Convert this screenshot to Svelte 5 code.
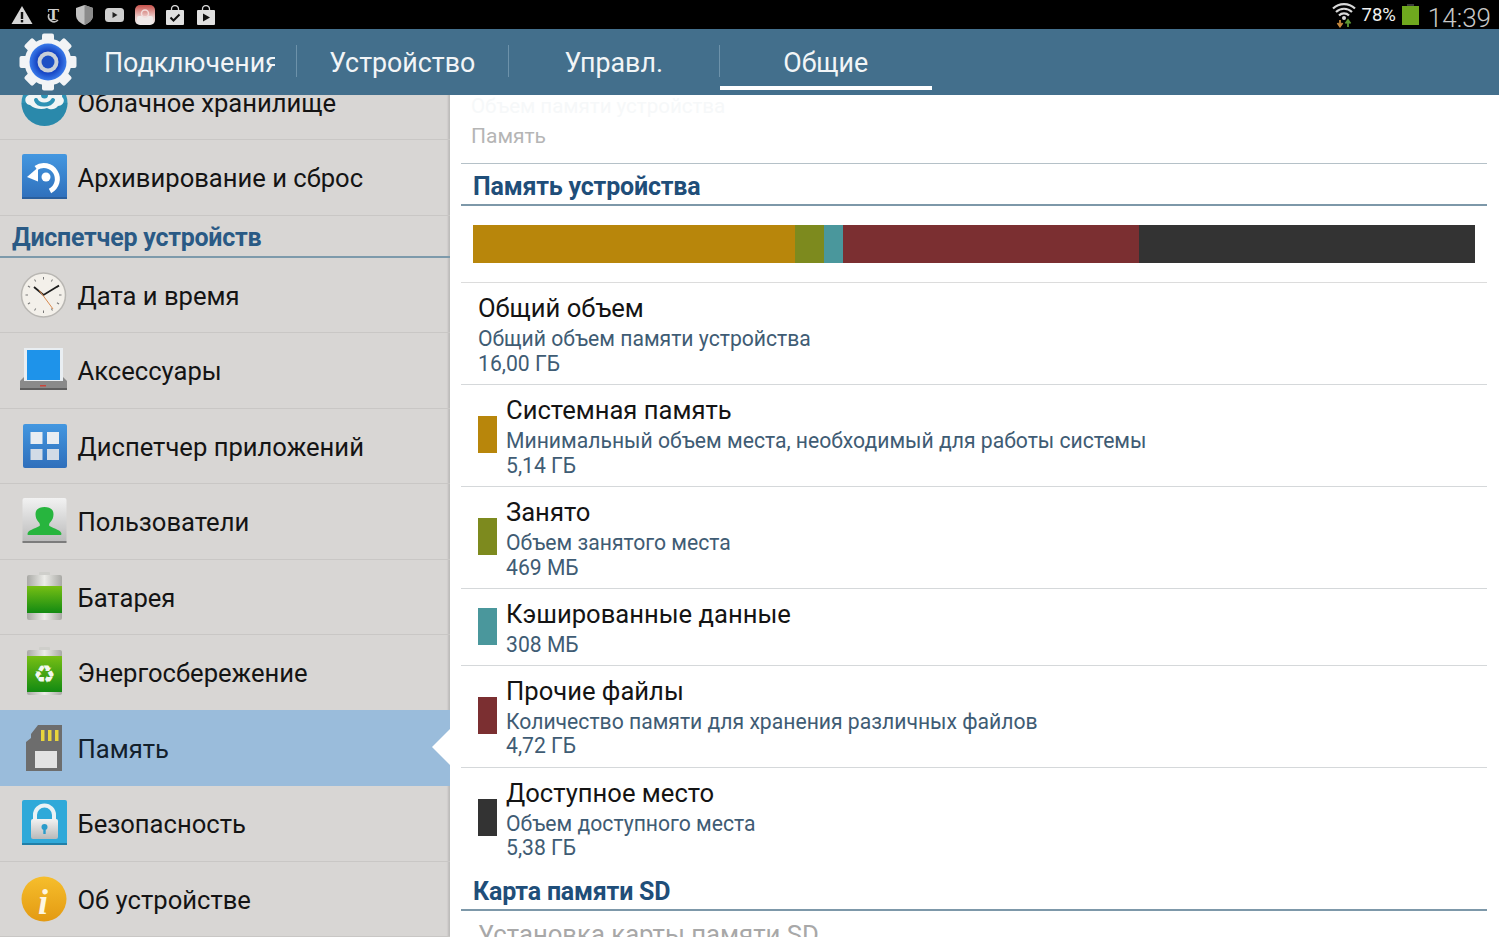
<script>
  const tabs = [
    { label: 'Подключения', first: true },
    { label: 'Устройство' },
    { label: 'Управл.' },
    { label: 'Общие', active: true }
  ];
  const items = [
    { kind: 'row', icon: 'cloud', label: 'Облачное хранилище' },
    { kind: 'row', icon: 'backup', label: 'Архивирование и сброс' },
    { kind: 'head', label: 'Диспетчер устройств' },
    { kind: 'row', icon: 'clock', label: 'Дата и время' },
    { kind: 'row', icon: 'dock', label: 'Аксессуары' },
    { kind: 'row', icon: 'apps', label: 'Диспетчер приложений' },
    { kind: 'row', icon: 'user', label: 'Пользователи' },
    { kind: 'row', icon: 'battery', label: 'Батарея' },
    { kind: 'row', icon: 'eco', label: 'Энергосбережение' },
    { kind: 'row', icon: 'sd', label: 'Память', selected: true },
    { kind: 'row', icon: 'lock', label: 'Безопасность' },
    { kind: 'row', icon: 'info', label: 'Об устройстве' }
  ];
  const segments = [
    { color: '#b8860b', width: 322 },
    { color: '#7d8a1e', width: 29 },
    { color: '#4a979c', width: 19 },
    { color: '#7b2f31', width: 296 },
    { color: '#333333', width: 336 }
  ];
  const stats = [
    { title: 'Общий объем', sub: 'Общий объем памяти устройства', value: '16,00 ГБ' },
    { color: '#b8860b', title: 'Системная память', sub: 'Минимальный объем места, необходимый для работы системы', value: '5,14 ГБ' },
    { color: '#7d8a1e', title: 'Занято', sub: 'Объем занятого места', value: '469 МБ' },
    { color: '#4a979c', title: 'Кэшированные данные', value: '308 МБ' },
    { color: '#7b2f31', title: 'Прочие файлы', sub: 'Количество памяти для хранения различных файлов', value: '4,72 ГБ' },
    { color: '#333333', title: 'Доступное место', sub: 'Объем доступного места', value: '5,38 ГБ', last: true }
  ];
  const gearTeeth = [0, 45, 90, 135, 180, 225, 270, 315];
  const clockTicks = [0, 30, 60, 90, 120, 150, 180, 210, 240, 270, 300, 330];
</script>

{#snippet rowIcon(name)}
  <svg class="ricon" viewBox="0 0 52 52" aria-hidden="true">
    {#if name === 'cloud'}
      <circle cx="26.5" cy="27" r="23" fill="#2f93b5" />
      <path d="M26.5 50a23 23 0 0 0 23-23h-46a23 23 0 0 0 23 23z" fill="#257f9f" opacity=".45" />
      <path d="M12 29c-5 0-7-8-1-10 1-6 8-8 12-5 3-3 9-3 11 0 5-2 11 2 10 7 4 3 1 9-4 9-3 4-8 4-11 2-5 2-13 1-17-3z" fill="#f1f5f5" />
      <path d="M18 24c2 6 14 6 17 0" fill="none" stroke="#2f93b5" stroke-width="4" stroke-linecap="round" />
      <circle cx="26.5" cy="19" r="3.5" fill="#2f93b5" />
    {:else if name === 'backup'}
      <rect x="4" y="3" width="45" height="45" rx="2" fill="url(#g-blue)" />
      <rect x="4" y="46" width="45" height="2" fill="#2a5f9d" />
      <path d="M32 40A13.5 13.5 0 1 0 18 17" fill="none" stroke="#fff" stroke-width="5" />
      <path d="M9 26l11-9.500v14z" fill="#fff" />
      <circle cx="28" cy="26" r="4.500" fill="#fff" />
    {:else if name === 'clock'}
      <circle cx="25.500" cy="26" r="22" fill="#f3f0ea" stroke="#b9b7b3" stroke-width="1.500" />
      {#each clockTicks as a}
        <line x1="25.500" y1="8" x2="25.500" y2="10.500" stroke="#777" stroke-width="1" transform="rotate({a} 25.500 26)" />
      {/each}
      <path d="M16 18l9.500 8L41 16.500" fill="none" stroke="#1d1d1d" stroke-width="1.800" />
      <path d="M21 21l14 19" stroke="#d98a4f" stroke-width="1" />
    {:else if name === 'dock'}
      <rect x="6" y="4" width="39" height="35" fill="#e9eef2" />
      <rect x="9" y="6" width="33" height="30" fill="#1e93ea" />
      <path d="M2 46v-9l4-4v4h39v-4l4 4v9z" fill="#8a8a8a" />
      <rect x="2" y="44" width="47" height="2" fill="#5f5f5f" />
      <rect x="22" y="41" width="6" height="1.500" fill="#c9453b" />
    {:else if name === 'apps'}
      <rect x="5" y="4" width="44" height="44" rx="2" fill="url(#g-blue)" />
      <rect x="12.500" y="12" width="12" height="12" fill="#e8edf2" />
      <rect x="29" y="12" width="12" height="12" fill="#e8edf2" />
      <rect x="12.500" y="29" width="12" height="11" fill="#d2dbe6" />
      <rect x="29" y="29" width="12" height="11" fill="#d2dbe6" />
    {:else if name === 'user'}
      <rect x="4.500" y="3" width="44" height="45" rx="2" fill="url(#g-silver)" />
      <rect x="4.500" y="46" width="44" height="2" fill="#7c7c7c" />
      <path d="M9.500 39c0-4 7-5 12-8 1-1 0-3-1-4-2-2-3-5-3-8 0-5 4-7 9-7s9 2 9 7c0 3-1 6-3 8-1 1-2 3-1 4 5 3 12 4 12 8 0 1-1 1-2 1H11c-1 0-1.500 0-1.500-1z" fill="#27b53e" />
    {:else if name === 'battery' || name === 'eco'}
      <rect x="21" y="1" width="11" height="4" rx="1" fill="#cfcfcb" />
      <rect x="9" y="4" width="35" height="45" rx="2" fill="url(#g-metal)" />
      <rect x="9" y="{name === 'eco' ? 10 : 15}" width="35" height="{name === 'eco' ? 36 : 27}" fill="url(#g-green)" />
      {#if name === 'eco'}
        <text class="recycle" x="26.500" y="37" text-anchor="middle">♻</text>
      {/if}
    {:else if name === 'sd'}
      <path d="M20 3h24v46H8V20l5-4v-4z" fill="#6d6d6d" />
      <rect x="23" y="8" width="3.500" height="11" fill="#e8d53c" />
      <rect x="30" y="8" width="3.500" height="11" fill="#e8d53c" />
      <rect x="37" y="8" width="3.500" height="11" fill="#e8d53c" />
      <rect x="17" y="29" width="22" height="17" fill="#e3e3e3" />
    {:else if name === 'lock'}
      <rect x="4" y="3" width="45" height="45" rx="2" fill="#2fa9d9" />
      <rect x="4" y="46" width="45" height="2" fill="#207fa8" />
      <path d="M17 24v-6a9.500 9.500 0 0 1 19 0v6" fill="none" stroke="#eaf2f5" stroke-width="4" />
      <rect x="13" y="22" width="27" height="20" rx="2" fill="url(#g-silver)" />
      <circle cx="26.500" cy="30" r="3" fill="#2a9ccb" />
      <rect x="25.300" y="31" width="2.400" height="6" fill="#2a9ccb" />
    {:else if name === 'info'}
      <circle cx="26" cy="26" r="22.500" fill="url(#g-amber)" />
      <text class="info-i" x="25" y="41" text-anchor="middle">i</text>
    {/if}
  </svg>
{/snippet}

<div class="screen">
  <svg class="defs" width="0" height="0" aria-hidden="true">
    <defs>
      <linearGradient id="g-blue" x1="0" y1="0" x2="0" y2="1"><stop offset="0" stop-color="#4397e0" /><stop offset="1" stop-color="#2f6fbb" /></linearGradient>
      <linearGradient id="g-silver" x1="0" y1="0" x2="0" y2="1"><stop offset="0" stop-color="#f2f2f2" /><stop offset="1" stop-color="#b9b9b9" /></linearGradient>
      <linearGradient id="g-metal" x1="0" y1="0" x2="1" y2="0"><stop offset="0" stop-color="#a9a9a5" /><stop offset=".5" stop-color="#ecece8" /><stop offset="1" stop-color="#a9a9a5" /></linearGradient>
      <linearGradient id="g-green" x1="0" y1="0" x2="0" y2="1"><stop offset="0" stop-color="#77bf14" /><stop offset="1" stop-color="#128a12" /></linearGradient>
      <linearGradient id="g-amber" x1="0" y1="0" x2="0" y2="1"><stop offset="0" stop-color="#f6be2c" /><stop offset="1" stop-color="#e39a12" /></linearGradient>
      <linearGradient id="g-app" x1="0" y1="0" x2="0" y2="1"><stop offset="0" stop-color="#c8524c" /><stop offset=".55" stop-color="#e9c3c0" /><stop offset="1" stop-color="#efefef" /></linearGradient>
      <radialGradient id="g-ring"><stop offset=".55" stop-color="#123fc0" /><stop offset="1" stop-color="#3a7bea" /></radialGradient>
    </defs>
  </svg>

  <div class="statusbar">
    <div class="notif">
      <svg class="n-warn" width="22" height="20" viewBox="0 0 22 20"><path d="M11 1l10.500 18H.5z" fill="#d6d6d6" /><rect x="9.800" y="7" width="2.400" height="7" fill="#111" /><rect x="9.800" y="15" width="2.400" height="2.400" fill="#111" /></svg>
      <svg class="n-nyt" width="15" height="20" viewBox="0 0 15 20"><path d="M3 9a5.500 5.500 0 0 0 9 6" fill="none" stroke="#c4c4c4" stroke-width="1.600" /><text class="nyt" x="7.500" y="15" text-anchor="middle">T</text></svg>
      <svg class="n-shield" width="17" height="20" viewBox="0 0 17 20"><path d="M8.500 0l8.500 3v7c0 5-4 8-8.500 10C4 18 0 15 0 10V3z" fill="#c2c2c2" /><path d="M8.500 0l8.500 3v7c0 5-4 8-8.500 10z" fill="#8b8b8b" /></svg>
      <svg class="n-yt" width="19" height="14" viewBox="0 0 19 14"><rect width="19" height="14" rx="3.500" fill="#cfcfcf" /><path d="M7.500 4l5 3-5 3z" fill="#222" /></svg>
      <svg class="n-app" width="20" height="20" viewBox="0 0 20 20"><rect width="20" height="20" rx="5" fill="url(#g-app)" /><rect x="2" y="11" width="16" height="7" rx="2" fill="#efe9e8" /><circle cx="10" cy="8.500" r="3.500" fill="none" stroke="#f2dcdb" stroke-width="1.500" /></svg>
      <svg class="n-bag" width="18" height="20" viewBox="0 0 18 20"><path d="M5.500 6V4a3.500 3.500 0 0 1 7 0v2" fill="none" stroke="#d6d6d6" stroke-width="1.300" /><rect y="5" width="18" height="15" rx="1" fill="#e0e0e0" /><path d="M4.500 12.500l3 3 6-6" fill="none" stroke="#111" stroke-width="2" /></svg>
      <svg class="n-bag2" width="18" height="20" viewBox="0 0 18 20"><path d="M5.500 6V4a3.500 3.500 0 0 1 7 0v2" fill="none" stroke="#d6d6d6" stroke-width="1.300" /><rect y="5" width="18" height="15" rx="1" fill="#e0e0e0" /><path d="M6 8.500l7 4-7 4z" fill="#111" /></svg>
    </div>
    <div class="sys">
      <svg width="24" height="26" viewBox="0 0 24 26">
        <path d="M1 6.500a16 16 0 0 1 22 0M4 10a11.500 11.500 0 0 1 16 0M7 13.500a7 7 0 0 1 10 0" fill="none" stroke="#d9d9d9" stroke-width="2.200" />
        <circle cx="12" cy="16" r="2" fill="#d9d9d9" />
        <path d="M8 18v5M5.500 21l2.500 3.500 2.500-3.500" fill="none" stroke="#c88a3e" stroke-width="1.800" />
        <path d="M16 25v-6M13.500 21.500L16 18l2.500 3.500" fill="none" stroke="#5f9a33" stroke-width="1.800" />
      </svg>
      <span class="pct">78%</span>
      <svg width="17" height="21" viewBox="0 0 17 21"><rect x="5" width="7" height="3" fill="#3a3a3a" /><rect y="2" width="17" height="19" fill="#6fa81e" /></svg>
      <span class="time">14:39</span>
    </div>
  </div>

  <header class="appbar">
    <div class="logo">
      <svg width="60" height="60" viewBox="0 0 60 60" aria-hidden="true">
        {#each gearTeeth as a}
          <rect x="24" y="1.500" width="12" height="10" rx="2" fill="#f2f4f6" transform="rotate({a} 30 30)" />
        {/each}
        <circle cx="30" cy="30" r="23.500" fill="#f2f4f6" />
        <circle cx="30" cy="30" r="18.500" fill="url(#g-ring)" />
        <circle cx="30" cy="30" r="10.500" fill="#c9d0d8" />
        <circle cx="30" cy="30" r="6.500" fill="#1c4fc4" />
      </svg>
    </div>
    <nav class="tabs">
      {#each tabs as t}
        <div class="tab" class:active={t.active} class:first={t.first}>
          <span class="tab-label">{t.label}</span>
        </div>
      {/each}
    </nav>
  </header>

  <main class="body">
    <aside class="sidebar">
      <div class="list">
        {#each items as it}
          {#if it.kind === 'head'}
            <div class="side-head">{it.label}</div>
          {:else}
            <div class="side-row" class:selected={it.selected}>
              {@render rowIcon(it.icon)}
              <span class="side-label">{it.label}</span>
              {#if it.selected}<i class="caret"></i>{/if}
            </div>
          {/if}
        {/each}
      </div>
    </aside>

    <section class="panel">
      <div class="crumb">
        <div class="ghost">Объем памяти устройства</div>
        <div class="crumb-label">Память</div>
      </div>
      <h2 class="sec">Память устройства</h2>
      <div class="barwrap">
        <div class="bar">
          {#each segments as s}
            <div style="background:{s.color};width:{s.width}px"></div>
          {/each}
        </div>
      </div>
      {#each stats as s}
        <div class="stat" class:last={s.last} class:short={!s.sub}>
          {#if s.color}<div class="swatch" style="background:{s.color}"></div>{/if}
          <div class="stat-text">
            <div class="stat-title">{s.title}</div>
            {#if s.sub}<div class="stat-sub">{s.sub}</div>{/if}
            <div class="stat-sub">{s.value}</div>
          </div>
        </div>
      {/each}
      <h2 class="sec sd">Карта памяти SD</h2>
      <div class="mount">Установка карты памяти SD</div>
    </section>
  </main>
</div>

<style>
  :global(body) { margin: 0; background: #000; }
  .screen {
    width: 1499px; height: 937px; overflow: hidden; display: flex; flex-direction: column;
    font-family: Roboto, "Noto Sans", sans-serif; background: #fff;
  }
  .defs { position: absolute; }

  .statusbar {
    height: 29px; flex: none; background: #000; display: flex; justify-content: space-between; align-items: center;
  }
  .notif { display: flex; align-items: center; padding-left: 11px; gap: 11px; }
  .n-nyt { margin-left: 2px; }
  .n-shield { margin-left: 4px; }
  .n-yt { margin-left: 1px; }
  .n-bag2 { margin-left: 2px; }
  .nyt { font: bold 17px "Liberation Serif", serif; fill: #cfcfcf; }
  .sys { display: flex; align-items: center; padding-right: 8px; }
  .pct { font-size: 18.500px; color: #f0f0f0; margin: 0 6px 0 5px; }
  .time { font-size: 26px; font-weight: 300; color: #c8c8c8; margin-left: 9px; padding-top: 7px; line-height: 22px; }

  .appbar { height: 66px; flex: none; background: #436f8c; display: flex; }
  .logo { width: 85.500px; flex: none; display: flex; align-items: center; padding-left: 18px; box-sizing: border-box; }
  .tabs { display: flex; }
  .tab {
    width: 211.500px; box-sizing: border-box; display: flex; align-items: center; justify-content: center;
    color: #f2f5f7; font-size: 26.800px; height: 61px; padding: 6px 20px 0; margin-bottom: 5px;
    border-right: 1px solid #5b829c;
    border-image: linear-gradient(to bottom, transparent 27%, #6d92aa 27%, #6d92aa 78%, transparent 78%) 1;
  }
  .tab.first { padding-left: 18.500px; padding-right: 21px; }
  .tab.active { border-right: 0; border-bottom: 4px solid #fff; border-image: none; padding-top: 10px; }
  .tab-label { white-space: nowrap; overflow: hidden; }
  .first .tab-label { width: 100%; }

  .body { flex: 1; min-height: 0; display: flex; }
  .sidebar { width: 450px; flex: none; background: #d8d6d4; overflow: hidden; box-shadow: inset -3px 0 2px -1px #bdbcba; }
  .list { margin-top: -30.500px; }
  .side-row {
    height: 75.500px; box-sizing: border-box; display: flex; align-items: center; position: relative;
    padding-left: 18px; gap: 7.500px; font-size: 25.600px; color: #141414; border-bottom: 1px solid #c9c7c5;
  }
  .side-label { padding-top: 2px; }
  .side-row.selected { background: #9abcdb; color: #13202c; border-bottom-color: #9abcdb; box-shadow: 0 -1px 0 #9abcdb; }
  .ricon { width: 52px; height: 52px; flex: none; }
  .recycle { font: 25px "DejaVu Sans", sans-serif; fill: #f4f8f0; }
  .info-i { font: italic bold 36px "Liberation Serif", serif; fill: #fdf6e2; }
  .caret {
    position: absolute; right: 0; top: 18.500px; width: 0; height: 0;
    border-top: 18.500px solid transparent; border-bottom: 18.500px solid transparent; border-right: 18px solid #fff;
  }
  .side-head {
    height: 42px; box-sizing: border-box; padding: 8px 0 0 12px; font-size: 25px; line-height: 28px; font-weight: 700;
    color: #2a5a85; border-bottom: 2px solid #7d9aab; letter-spacing: -0.25px;
  }

  .panel { flex: 1; min-width: 0; padding: 0 12px 0 11px; overflow: hidden; }
  .crumb { height: 69px; box-sizing: border-box; border-bottom: 1px solid #b5c1c8; padding-left: 10px; }
  .ghost { font-size: 20.500px; line-height: 22px; color: #f6f8f9; }
  .crumb-label { font-size: 21px; line-height: 26px; color: #b5b5b5; margin-top: 6px; }
  .sec {
    margin: 0; height: 42px; box-sizing: border-box; padding: 9px 0 0 12px; font-size: 25px; line-height: 28px; font-weight: 700;
    color: #1f4e79; border-bottom: 2px solid #7d98a9; letter-spacing: -0.2px;
  }
  .sec.sd { height: 41px; padding-top: 8px; }
  .barwrap { height: 77px; box-sizing: border-box; padding: 19px 12px 0; border-bottom: 1px solid #dcdcdc; }
  .bar { display: flex; height: 38px; }
  .stat {
    display: flex; align-items: center; gap: 9px; padding: 10px 0 8px 17px; border-bottom: 1px solid #d5d8da;
  }
  .stat.short { padding-bottom: 7px; }
  .stat.last { border-bottom: 0; padding-bottom: 9px; }
  .swatch { width: 19px; height: 37px; flex: none; margin-bottom: 4px; }
  .stat-title { font-size: 25.600px; line-height: 30px; color: #141414; margin-bottom: 4px; }
  .stat-sub { font-size: 21.150px; line-height: 24.500px; color: #3f5c74; }
  .mount { padding: 8px 0 0 17px; font-size: 25.700px; line-height: 30px; color: #a8a8a8; white-space: nowrap; }
</style>
